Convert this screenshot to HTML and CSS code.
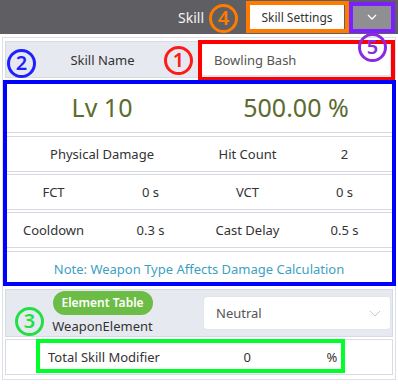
FILE: index.html
```html
<!DOCTYPE html>
<html>
<head>
<meta charset="utf-8">
<link rel="stylesheet" href="styles.css">
</head>
<body>
<div class="page">
  <header class="topbar">
    <span class="topbar-title">Skill</span>
    <button class="btn-settings">Skill Settings</button>
    <button class="btn-more">
      <svg width="10" height="6" viewBox="0 0 10 6"><path d="M1 1 L5 5 L9 1" fill="none" stroke="#ffffff" stroke-width="1.3"/></svg>
    </button>
  </header>

  <main class="panel">
    <div class="name-row">
      <div class="name-label">Skill Name</div>
      <div class="name-input">Bowling Bash</div>
    </div>

    <div class="stats">
      <div class="row row-big">
        <div class="span2">Lv 10</div>
        <div class="span2">500.00 %</div>
      </div>
      <div class="row">
        <div class="span2">Physical Damage</div>
        <div>Hit Count</div>
        <div>2</div>
      </div>
      <div class="row">
        <div>FCT</div>
        <div>0 s</div>
        <div>VCT</div>
        <div>0 s</div>
      </div>
      <div class="row">
        <div>Cooldown</div>
        <div>0.3 s</div>
        <div>Cast Delay</div>
        <div>0.5 s</div>
      </div>
      <div class="row row-note">
        <div class="span4">Note: Weapon Type Affects Damage Calculation</div>
      </div>
    </div>

    <div class="element-row">
      <div class="element-left">
        <button class="btn-element">Element Table</button>
        <div class="element-label">WeaponElement</div>
      </div>
      <div class="element-select">
        <span>Neutral</span>
        <svg width="12" height="7" viewBox="0 0 12 7"><path d="M1 1 L6 6 L11 1" fill="none" stroke="#c4c8d0" stroke-width="1"/></svg>
      </div>
    </div>

    <div class="total-row">
      <div class="total-label">Total Skill Modifier</div>
      <div class="total-value">0</div>
      <div class="total-unit">%</div>
    </div>
  </main>
  <div class="next-panel"></div>

  <div class="mark box-red"></div>
  <div class="mark box-blue"></div>
  <div class="mark box-orange"></div>
  <div class="mark box-purple"></div>
  <div class="mark box-green"></div>

  <div class="num num-1">1</div>
  <div class="num num-2">2</div>
  <div class="num num-3">3</div>
  <div class="num num-4">4</div>
  <div class="num num-5">5</div>
</div>
</body>
</html>
```

FILE: styles.css
```css
* { box-sizing: border-box; }
html, body { margin: 0; padding: 0; background: #ffffff; }
body {
  font-family: "Noto Sans", "Open Sans", sans-serif;
  font-size: 13px;
  color: #333333;
}
.page { position: relative; width: 398px; height: 384px; overflow: hidden; }

/* top bar */
.topbar {
  height: 34px;
  background: #5f5f63;
  display: flex;
  align-items: center;
  justify-content: flex-end;
  padding-right: 7px;
}
.topbar-title { color: #f4f4f4; font-size: 14px; margin-right: 46px; }
.btn-settings {
  width: 94px; height: 24px;
  border: none; background: #ffffff;
  font-family: inherit; font-size: 12px; color: #333;
  padding: 0;
}
.btn-more {
  width: 38px; height: 24px; margin-left: 9px;
  border: none; background: #8e8e93; padding: 0;
  display: flex; align-items: center; justify-content: center;
}

/* panel */
.panel {
  margin: 3px 2px 0;
  border: 1px solid #dcdfe5;
  padding: 3px 2px 4px;
}
.name-row {
  height: 37px;
  background: #e6e9f0;
  border: 1px solid #d6dae3;
  display: grid;
  grid-template-columns: 1fr 1fr;
  align-items: center;
}
.name-label { text-align: center; }
.name-input {
  height: 33px;
  background: #fff;
  border: 1px solid #dfe2e9;
  border-radius: 3px;
  margin: 0 1px 0 2px;
  display: flex; align-items: center;
  padding-left: 12px;
  color: #555;
}

.stats { margin-top: 1px; }
.row {
  display: grid;
  grid-template-columns: repeat(4, 1fr);
  align-items: center;
  text-align: center;
  height: 36px;
  margin-top: 2px;
  border-top: 1px solid #d6d9e2;
  border-bottom: 1px solid #d6d9e2;
}
.span2 { grid-column: span 2; }
.span4 { grid-column: span 4; }
.row-big {
  height: 54px;
  margin-top: 0;
  border-top: none;
  font-size: 25px;
  color: #5c6b2e;
  padding-top: 2px;
}
.row-big + .row { margin-top: 3px; }
.row-note { color: #3d9fc2; border-bottom: none; height: 35px; margin-top: 3px; }

.element-row {
  margin-top: 3px;
  height: 48px;
  background: #e6e9f0;
  border: 1px solid #d6dae3;
  display: grid;
  grid-template-columns: 1fr 1fr;
  align-items: center;
}
.element-left {
  display: flex; flex-direction: column; align-items: center;
  margin-top: -2px;
}
.btn-element {
  width: 100px; height: 24px;
  border: none; border-radius: 12px;
  background: #6cbd45; color: #fff;
  font-family: inherit; font-size: 12px; font-weight: 600;
  padding: 0;
}
.element-label { margin-top: 3px; line-height: 16px; }
.element-select {
  height: 34px;
  background: #fff;
  border: 1px solid #e2e5ec;
  border-radius: 4px;
  margin: 0 1px 0 4px;
  display: flex; align-items: center; justify-content: space-between;
  padding: 0 9px 0 12px;
  color: #555;
}

.total-row {
  margin-top: 2px;
  height: 36px;
  border: 1px solid #d8dbe2;
  display: grid;
  grid-template-columns: repeat(4, 1fr);
  align-items: center;
}
.total-label { grid-column: span 2; padding-left: 42px; }
.total-value { text-align: center; }
.total-unit { padding-left: 31px; }

.next-panel { margin: 4px 2px 0; border-top: 1px solid #dcdfe5; }

/* annotation overlays */
.mark { position: absolute; border: 4px solid; }
.box-red { left: 198px; top: 40px; width: 197px; height: 41px; border-color: #ff0000; }
.box-blue { left: 3px; top: 80px; width: 393px; height: 206px; border-color: #0000ff; }
.box-orange { left: 246px; top: 1px; width: 103px; height: 32px; border-color: #ff7b00; }
.box-purple { left: 349px; top: 2px; width: 46px; height: 31px; border-color: #7b1fff; }
.box-green { left: 36px; top: 339px; width: 309px; height: 34px; border-color: #00ff2a; }

.num {
  position: absolute;
  width: 29px; height: 29px;
  border: 3px solid;
  border-radius: 50%;
  display: flex; align-items: center; justify-content: center;
  font-family: "Noto Sans", sans-serif;
  font-size: 20px; font-weight: 600; line-height: 1;
  padding-bottom: 1px;
}
.num-1 { left: 164px; top: 46px; color: #ff1a1a; border-color: #ff1a1a; }
.num-2 { left: 7px; top: 49px; color: #1f1fff; border-color: #1f1fff; }
.num-3 { left: 15px; top: 307px; color: #22e044; border-color: #22e044; }
.num-4 { left: 209px; top: 4px; color: #ff7b00; border-color: #ff7b00; }
.num-5 { left: 358px; top: 33px; color: #8a2be2; border-color: #8a2be2; }
```
